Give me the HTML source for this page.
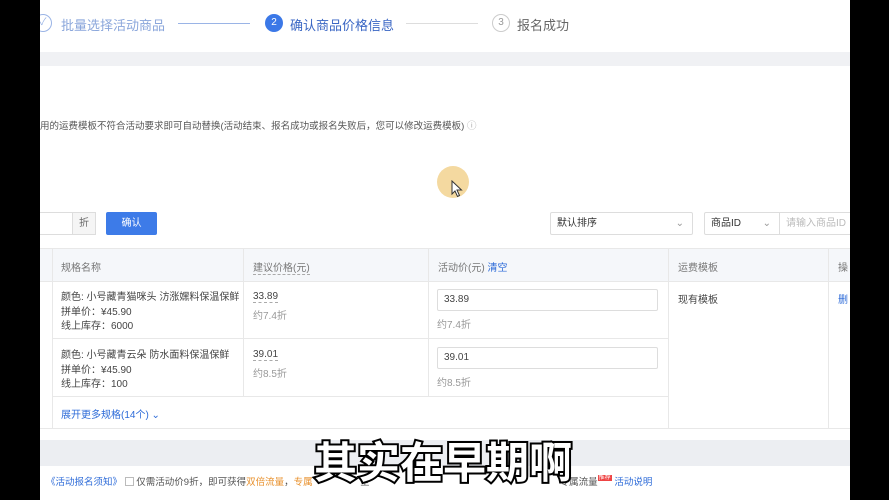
<!DOCTYPE html><html><head><meta charset="utf-8"><style>
*{margin:0;padding:0;box-sizing:border-box}
body{width:889px;height:500px;background:#000;position:relative;overflow:hidden;font-family:"Liberation Sans","Noto Sans CJK SC",sans-serif;font-size:10px;color:#333}
.pg{position:absolute;left:40px;top:0;width:810px;height:500px;background:#fff;overflow:hidden}
.a{position:absolute}
.blue{color:#2d6bd8}
.g{color:#999}
.ln{position:absolute;background:#e8e8e8}
</style></head><body><div class="pg">
<div class="a" style="left:-6px;top:14px;width:18px;height:18px;border:1px solid #9ab4e6;border-radius:50%;color:#9ab4e6;font-size:10px;text-align:center;line-height:16px">✓</div>
<div class="a" style="left:21px;top:15px;font-size:13px;color:#8aa6db">批量选择活动商品</div>
<div class="a" style="left:138px;top:23px;width:72px;height:1px;background:#9ab4e6"></div>
<div class="a" style="left:225px;top:14px;width:18px;height:18px;background:#3b78e7;border-radius:50%;color:#fff;font-size:10px;text-align:center;line-height:18px">2</div>
<div class="a" style="left:250px;top:15px;font-size:13px;color:#3a66c4">确认商品价格信息</div>
<div class="a" style="left:366px;top:23px;width:72px;height:1px;background:#ddd"></div>
<div class="a" style="left:452px;top:14px;width:18px;height:18px;border:1px solid #ccc;border-radius:50%;color:#999;font-size:10px;text-align:center;line-height:16px">3</div>
<div class="a" style="left:477px;top:15px;font-size:13px;color:#666">报名成功</div>
<div class="a" style="left:0;top:52px;width:810px;height:14px;background:#f0f1f4"></div>
<div class="a" style="left:0;top:118px;font-size:9.5px;color:#555;white-space:nowrap">用的运费模板不符合活动要求即可自动替换(活动结束、报名成功或报名失败后，您可以修改运费模板) <span style="color:#aaa">ⓘ</span></div>
<div class="a" style="left:397px;top:166px;width:32px;height:32px;border-radius:50%;background:#f4d9a0"></div>
<svg class="a" style="left:411px;top:180px" width="12" height="18" viewBox="0 0 12 18"><path d="M1 1 L1 14 L4 11 L6.5 16.5 L8.5 15.5 L6 10 L10.5 10 Z" fill="#fff" stroke="#333" stroke-width="1"/></svg>
<div class="a" style="left:-2px;top:212px;width:34px;height:23px;border:1px solid #ddd;border-right:none"></div>
<div class="a" style="left:32px;top:212px;width:24px;height:23px;border:1px solid #ddd;background:#f5f5f5;text-align:center;line-height:21px;color:#666">折</div>
<div class="a" style="left:66px;top:212px;width:51px;height:23px;background:#3d7be8;border-radius:2px;color:#fff;text-align:center;line-height:23px">确认</div>
<div class="a" style="left:510px;top:212px;width:143px;height:23px;border:1px solid #ddd;border-radius:2px;padding-left:6px;line-height:21px">默认排序<span class="a g" style="right:8px;top:0">⌄</span></div>
<div class="a" style="left:664px;top:212px;width:76px;height:23px;border:1px solid #ddd;border-radius:2px 0 0 2px;padding-left:6px;line-height:21px">商品ID<span class="a g" style="right:8px;top:0">⌄</span></div>
<div class="a" style="left:740px;top:212px;width:80px;height:23px;border:1px solid #ddd;border-left:none;padding-left:6px;line-height:21px;color:#bbb">请输入商品ID</div>
<div class="a" style="left:0;top:248px;width:810px;height:33px;background:#f5f7fa"></div>
<div class="ln" style="left:0;top:248px;width:810px;height:1px"></div>
<div class="ln" style="left:0;top:281px;width:810px;height:1px"></div>
<div class="ln" style="left:12px;top:338px;width:616px;height:1px"></div>
<div class="ln" style="left:12px;top:396px;width:616px;height:1px"></div>
<div class="ln" style="left:0;top:428px;width:810px;height:1px"></div>
<div class="ln" style="left:12px;top:248px;width:1px;height:180px"></div>
<div class="ln" style="left:203px;top:248px;width:1px;height:148px"></div>
<div class="ln" style="left:388px;top:248px;width:1px;height:148px"></div>
<div class="ln" style="left:628px;top:248px;width:1px;height:180px"></div>
<div class="ln" style="left:788px;top:248px;width:1px;height:180px"></div>
<div class="a g" style="left:21px;top:259px;color:#777">规格名称</div>
<div class="a" style="left:213px;top:259px;color:#777;border-bottom:1px dashed #aaa">建议价格(元)</div>
<div class="a" style="left:398px;top:259px;color:#777">活动价(元) <span class="blue">清空</span></div>
<div class="a" style="left:638px;top:259px;color:#777">运费模板</div>
<div class="a" style="left:798px;top:259px;color:#777">操</div>
<div class="a" style="left:21px;top:291px;line-height:14.5px;color:#444">颜色: 小号藏青猫咪头 汸涨嫼料保温保鲜<br>拼单价：¥45.90<br>线上库存：6000</div>
<div class="a" style="left:213px;top:291px;color:#444;border-bottom:1px dashed #aaa">33.89</div>
<div class="a g" style="left:213px;top:307px">约7.4折</div>
<div class="a" style="left:397px;top:289px;width:221px;height:22px;border:1px solid #ddd;border-radius:2px;padding-left:6px;line-height:20px;color:#444">33.89</div>
<div class="a g" style="left:397px;top:316px">约7.4折</div>
<div class="a" style="left:638px;top:291px;color:#444">现有模板</div>
<div class="a blue" style="left:798px;top:291px">删</div>
<div class="a" style="left:21px;top:349px;line-height:14.5px;color:#444">颜色: 小号藏青云朵 防水面料保温保鲜<br>拼单价：¥45.90<br>线上库存：100</div>
<div class="a" style="left:213px;top:349px;color:#444;border-bottom:1px dashed #aaa">39.01</div>
<div class="a g" style="left:213px;top:365px">约8.5折</div>
<div class="a" style="left:397px;top:347px;width:221px;height:22px;border:1px solid #ddd;border-radius:2px;padding-left:6px;line-height:20px;color:#444">39.01</div>
<div class="a g" style="left:397px;top:374px">约8.5折</div>
<div class="a blue" style="left:21px;top:406px">展开更多规格(14个) ⌄</div>
<div class="a" style="left:0;top:440px;width:810px;height:26px;background:#eceef2"></div>
<div class="a" style="left:6px;top:472px;font-size:9.5px;color:#555;white-space:nowrap"><span class="blue">《活动报名须知》</span> <span style="display:inline-block;width:9px;height:9px;border:1px solid #bbb;vertical-align:-1px"></span> 仅需活动价9折，即可获得<span style="color:#e8912d">双倍流量</span>，<span style="color:#e8912d">专属</span>　　　　　全　　　　　　　　　　　　　　　　　　　　专属流量<span style="background:#e44;color:#fff;font-size:6px;padding:0 1px;vertical-align:6px">推荐</span> <span class="blue">活动说明</span></div>
<div class="a" style="left:274px;top:432px;font-size:43px;font-weight:bold;color:#fff;letter-spacing:0px;-webkit-text-stroke:4px #000;paint-order:stroke fill;font-family:'Noto Sans CJK SC',sans-serif;line-height:56px;white-space:nowrap">其实在早期啊</div>
</div></body></html>
